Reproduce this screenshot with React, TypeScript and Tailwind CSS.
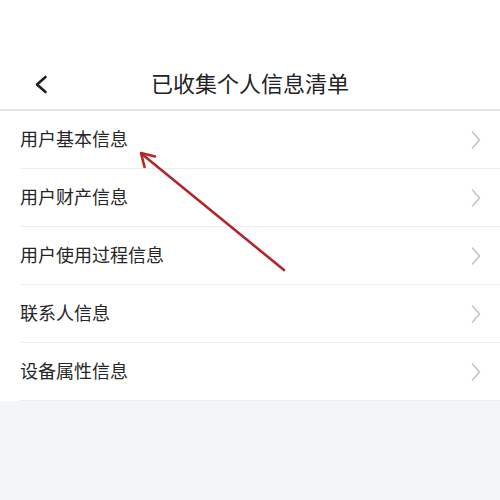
import React from "react";

const items = ["用户基本信息", "用户财产信息", "用户使用过程信息", "联系人信息", "设备属性信息"];

export default function App() {
  return (
    <div
      className="relative w-[500px] h-[500px] bg-[#f4f5f7] flex flex-col overflow-hidden"
      style={{ fontFamily: '"Noto Sans CJK SC", "Noto Sans", sans-serif' }}
    >
      <div className="bg-white h-[111px] pt-[60px] border-b-2 border-[#e4e4e4] flex-none">
        <div className="relative h-[48px] flex items-center justify-center">
          <svg className="absolute left-[30px] top-[12px]" width="24" height="24" viewBox="0 0 24 24">
            <path d="M15.5 5 L7 12.5 L15.5 20" fill="none" stroke="#1e1e1e" strokeWidth="2.6" strokeLinecap="round" strokeLinejoin="round" />
          </svg>
          <span className="text-[22px] leading-none text-[#222] pb-[4px]">已收集个人信息清单</span>
        </div>
      </div>
      <div className="bg-white flex-none">
        {items.map((t) => (
          <div key={t} className="ml-[20px] h-[58px] border-b border-[#ededed] flex items-center justify-between pr-[18px]">
            <span className="text-[18px] leading-none text-[#262626] pb-[4px]">{t}</span>
            <svg width="12" height="20" viewBox="0 0 12 20">
              <path d="M2.5 2 L9.5 10 L2.5 18" fill="none" stroke="#c4c4c4" strokeWidth="1.6" strokeLinecap="round" strokeLinejoin="round" />
            </svg>
          </div>
        ))}
      </div>
      <svg className="absolute left-0 top-0 pointer-events-none" width="500" height="500" viewBox="0 0 500 500">
        <line x1="143" y1="155" x2="284" y2="270" stroke="#b3262a" strokeWidth="2.6" strokeLinecap="round" />
        <path d="M155 156.5 L141 153 L144.5 167" fill="none" stroke="#b3262a" strokeWidth="2.6" strokeLinecap="round" strokeLinejoin="round" />
      </svg>
    </div>
  );
}
